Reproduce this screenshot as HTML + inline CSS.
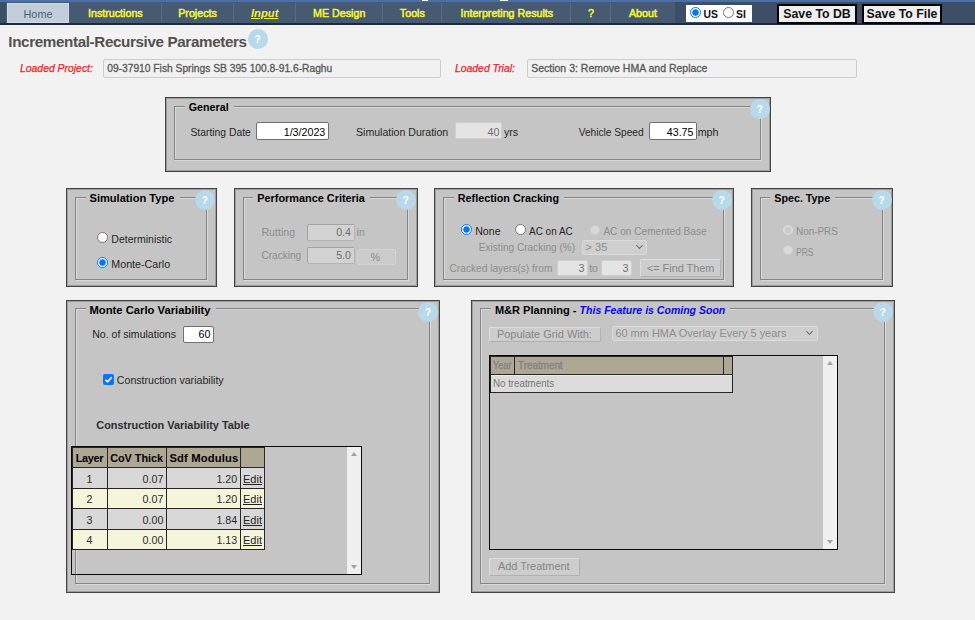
<!DOCTYPE html>
<html>
<head>
<meta charset="utf-8">
<title>Incremental-Recursive Parameters</title>
<style>
html,body{margin:0;padding:0;}
body{width:975px;height:620px;overflow:hidden;background:#f2f2f2;font-family:"Liberation Sans","DejaVu Sans",sans-serif;font-size:10.4px;color:#262626;position:relative;}
body>div{position:absolute;box-sizing:border-box;white-space:nowrap;}
#topstrip{left:0;top:0;width:975px;height:2px;background:#4d6fa8;overflow:hidden;}
#nav{left:0;top:2px;width:975px;height:23px;background:#3c4f66;border-bottom:2px solid #1d2a39;}
#navitems{left:6px;top:2px;width:669px;height:21px;background:#465a71;}
.sep{top:3px;width:1px;height:19px;background:#586b82;}
#home{left:7px;top:3px;width:62px;height:20px;background:#c1cdda;border:1px solid #d3dbe5;}
#units{left:686px;top:5px;width:66px;height:17px;background:#fff;}
.t{line-height:14px;color:#262626;}
.nv{color:#f4f13a;-webkit-text-stroke:0.55px #f4f13a;}
.radio{width:11px;height:11px;border-radius:50%;}
.ron{border:1px solid #0075ff;background:radial-gradient(circle,#0075ff 0,#0075ff 2.9px,#fff 3.5px);}
.roff{border:1px solid #767676;background:#fff;}
.rdis{width:10px;height:10px;border:1px solid #cfcfcf;background:#d9d9d9;}
.rdison{width:10px;height:10px;border:2px solid #d9d9d9;background:#c9c9c9;}
.btn{border:2px solid #000;background:#efefef;font-weight:bold;color:#111;text-align:center;}
.h1{color:#55504e;}
.help{border-radius:50%;background:#b8d9ea;color:#fff;font-weight:bold;font-size:10px;text-align:center;}
.red{color:#ea1f2a;font-style:italic;-webkit-text-stroke:0.25px #ea1f2a;}
.ro{border:1px solid #cdcdcd;background:#f1f1f1;border-radius:2px;}
.rot{color:#585858;-webkit-text-stroke:0.3px #585858;}
.panel{background:#c5c5c5;border:1px solid #444;box-shadow:inset 0 0 0 1px rgba(0,0,0,0.2);}
.fs{border:1px solid #858585;box-shadow:inset 1px 1px 0 #d9d9d9, 1px 1px 0 #d9d9d9;}
.lgbg{background:#c5c5c5;}
.lg{font-weight:bold;color:#000;}
.dis{color:#8d8d8d;}
.inp{background:#fff;border:1px solid #707070;border-radius:2px;}
.inpd{background:#e4e4e4;border:1px solid #cfcfcf;border-radius:2px;}
.inpd2{background:#d2d2d2;border:1px solid #b4b4b4;border-top-color:#a2a2a2;border-left-color:#a2a2a2;border-radius:2px;}
.sel{background:#cfcfcf;border:1px solid #dadada;border-radius:2px;}
.dbtn{background:#cdcdcd;border:1px solid #b0b0b0;border-top-color:#dddddd;border-left-color:#dddddd;border-radius:2px;}
.it{color:#000;}
.itd{color:#6e6e6e;}
.grid{border:1px solid #0a0a0a;}
.sb{background:#f0f0f0;}
.th{background:#aea793;border:1px solid #262626;}
.c0{background:#d8d8d8;border:1px solid #262626;}
.c1{background:#f5f5dc;border:1px solid #262626;}
.tht{font-weight:bold;color:#000;}
.ct{color:#2a2a2a;}
.lnk{color:#222;text-decoration:underline;}
.arr{width:0;height:0;border-left:3px solid transparent;border-right:3px solid transparent;}
.chev{width:5px;height:5px;border-right:1.6px solid #6f6f6f;border-bottom:1.6px solid #6f6f6f;transform:rotate(45deg);}
</style>
</head>
<body>

<div id="topstrip"></div>
<div id="nav"></div>
<div style="left:422px;top:0;width:6px;height:1px;background:#fff;"></div>
<div style="left:500px;top:0;width:8px;height:1px;background:#fff;"></div>
<div id="navitems"></div>
<div id="home"></div>
<div class="t" style="left:-12px;width:100px;text-align:center;top:7.00px;font-size:10.9px;color:#4b6079;">Home</div>
<div class="t nv" style="left:45.35px;width:140px;text-align:center;top:6.00px;font-size:10.7px;">Instructions</div>
<div class="t nv" style="left:127.5px;width:140px;text-align:center;top:6.00px;font-size:10.7px;">Projects</div>
<div class="t nv" style="left:194.7px;width:140px;text-align:center;top:6.00px;font-size:10.7px;font-style:italic;text-decoration:underline;font-weight:bold;-webkit-text-stroke:0;font-size:11.2px;">Input</div>
<div class="t nv" style="left:269.25px;width:140px;text-align:center;top:6.00px;font-size:10.7px;">ME Design</div>
<div class="t nv" style="left:342.35px;width:140px;text-align:center;top:6.00px;font-size:10.7px;">Tools</div>
<div class="t nv" style="left:436.85px;width:140px;text-align:center;top:6.00px;font-size:10.7px;">Interpreting Results</div>
<div class="t nv" style="left:521.05px;width:140px;text-align:center;top:6.00px;font-size:10.7px;">?</div>
<div class="t nv" style="left:572.9px;width:140px;text-align:center;top:6.00px;font-size:10.7px;">About</div>
<div class="sep" style="left:161px;"></div>
<div class="sep" style="left:233px;"></div>
<div class="sep" style="left:295px;"></div>
<div class="sep" style="left:382px;"></div>
<div class="sep" style="left:441px;"></div>
<div class="sep" style="left:570px;"></div>
<div class="sep" style="left:610px;"></div>
<div id="units"></div>
<div class="radio ron" style="left:689.9px;top:7.3px;"></div>
<div class="t" style="left:703.5px;top:7.50px;font-size:10.4px;font-weight:bold;color:#111;">US</div>
<div class="radio roff" style="left:722.5px;top:7.3px;"></div>
<div class="t" style="left:736px;top:7.50px;font-size:10.4px;font-weight:bold;color:#111;">SI</div>
<div class="btn" style="left:777px;top:4px;width:80px;height:20px;"></div>
<div class="t" style="left:767px;width:100px;text-align:center;top:7.00px;font-size:12.3px;font-weight:bold;color:#111;">Save To DB</div>
<div class="btn" style="left:862px;top:4px;width:80px;height:20px;"></div>
<div class="t" style="left:852px;width:100px;text-align:center;top:7.00px;font-size:12.3px;font-weight:bold;color:#111;">Save To File</div>
<div class="t h1" style="left:8.3px;top:34.50px;font-size:15.2px;font-weight:bold;letter-spacing:-0.36px;">Incremental-Recursive Parameters</div>
<div class="help" style="left:247.6px;top:28.5px;width:20px;height:20px;line-height:21.5px;">?</div>
<div class="t red" style="left:20px;top:61.50px;font-size:10.42px;">Loaded Project:</div>
<div class="ro" style="left:103px;top:59px;width:338px;height:19px;"></div>
<div class="t rot" style="left:107.2px;top:61.50px;font-size:10.25px;">09-37910 Fish Springs SB 395 100.8-91.6-Raghu</div>
<div class="t red" style="left:455px;top:61.50px;font-size:10.4px;">Loaded Trial:</div>
<div class="ro" style="left:527px;top:59px;width:330px;height:19px;"></div>
<div class="t rot" style="left:531.2px;top:61.00px;font-size:10.5px;">Section 3: Remove HMA and Replace</div>
<div class="panel" style="left:165px;top:97px;width:606px;height:75px;"></div>
<div class="fs" style="left:174px;top:106px;width:587px;height:54px;"></div>
<div class="lgbg" style="left:184.8px;top:100.8px;width:48.8px;height:13px;"></div>
<div class="t lg" style="left:188.8px;top:100.00px;font-size:10.7px;">General</div>
<div class="help" style="left:749.8px;top:99.3px;width:20px;height:20px;line-height:21.5px;">?</div>
<div class="t" style="left:190.4px;top:125.50px;font-size:10.37px;">Starting Date</div>
<div class="inp" style="left:256px;top:122px;width:73px;height:18px;"></div>
<div class="t it" style="right:649.7px;top:125.00px;font-size:10.7px;">1/3/2023</div>
<div class="t" style="left:356px;top:125.00px;font-size:10.57px;">Simulation Duration</div>
<div class="inpd" style="left:455px;top:122px;width:47px;height:17px;"></div>
<div class="t itd" style="right:475.5px;top:125.00px;font-size:10.7px;">40</div>
<div class="t" style="left:504.1px;top:125.00px;font-size:10.5px;">yrs</div>
<div class="t" style="left:578.8px;top:125.50px;font-size:10.15px;">Vehicle Speed</div>
<div class="inp" style="left:649px;top:122px;width:48px;height:18px;"></div>
<div class="t it" style="right:281.5px;top:125.00px;font-size:10.7px;">43.75</div>
<div class="t" style="left:697.7px;top:125.00px;font-size:10.64px;">mph</div>
<div class="panel" style="left:66px;top:188px;width:151px;height:99px;"></div>
<div class="fs" style="left:75px;top:197px;width:132px;height:83px;"></div>
<div class="lgbg" style="left:85.5px;top:191.7px;width:94px;height:13px;"></div>
<div class="t lg" style="left:89.5px;top:191.00px;font-size:11.1px;">Simulation Type</div>
<div class="help" style="left:194.9px;top:190.2px;width:20px;height:20px;line-height:21.5px;">?</div>
<div class="radio roff" style="left:97.3px;top:232.3px;"></div>
<div class="t" style="left:111.3px;top:232.00px;font-size:10.5px;">Deterministic</div>
<div class="radio ron" style="left:97.3px;top:257.2px;"></div>
<div class="t" style="left:111.3px;top:257.00px;font-size:10.7px;">Monte-Carlo</div>
<div class="panel" style="left:234px;top:188px;width:184px;height:99px;"></div>
<div class="fs" style="left:243px;top:197px;width:165px;height:83px;"></div>
<div class="lgbg" style="left:253.3px;top:191.7px;width:116.7px;height:13px;"></div>
<div class="t lg" style="left:257.3px;top:191.00px;font-size:10.89px;">Performance Criteria</div>
<div class="help" style="left:395.8px;top:190.4px;width:20px;height:20px;line-height:21.5px;">?</div>
<div class="t dis" style="left:261.4px;top:225.00px;font-size:10.64px;">Rutting</div>
<div class="inpd2" style="left:307px;top:224px;width:48px;height:17px;"></div>
<div class="t itd" style="right:624px;top:225.00px;font-size:10.7px;">0.4</div>
<div class="t dis" style="left:356.6px;top:225.50px;font-size:10.4px;">in</div>
<div class="t dis" style="left:261.4px;top:248.50px;font-size:10.09px;">Cracking</div>
<div class="inpd2" style="left:307px;top:247px;width:48px;height:17px;"></div>
<div class="t itd" style="right:624px;top:248.00px;font-size:10.7px;">5.0</div>
<div class="sel" style="left:356.5px;top:249px;width:39px;height:15.5px;background:#cbcbcb;border-color:#d3d3d3;"></div>
<div class="t dis" style="left:325.3px;width:100px;text-align:center;top:250.00px;font-size:10.7px;">%</div>
<div class="panel" style="left:434px;top:188px;width:300px;height:99px;"></div>
<div class="fs" style="left:443px;top:197px;width:281px;height:83px;"></div>
<div class="lgbg" style="left:453.8px;top:191.7px;width:110.3px;height:13px;"></div>
<div class="t lg" style="left:457.8px;top:191.00px;font-size:10.79px;">Reflection Cracking</div>
<div class="help" style="left:711.9px;top:190.2px;width:20px;height:20px;line-height:21.5px;">?</div>
<div class="radio ron" style="left:461.2px;top:224.2px;"></div>
<div class="t" style="left:475.2px;top:224.00px;font-size:10.62px;">None</div>
<div class="radio roff" style="left:515px;top:224.2px;"></div>
<div class="t" style="left:529px;top:224.50px;font-size:10.4px;transform:scaleX(0.958);transform-origin:0 0;">AC on AC</div>
<div class="radio rdis" style="left:589.5px;top:224.5px;"></div>
<div class="t dis" style="left:603.4px;top:224.50px;font-size:10.1px;">AC on Cemented Base</div>
<div class="t dis" style="left:478.8px;top:240.50px;font-size:10.08px;">Existing Cracking (%)</div>
<div class="sel" style="left:581.5px;top:240px;width:65.5px;height:14.5px;"></div>
<div class="t dis" style="left:585.6px;top:240.00px;font-size:10.99px;">&gt; 35</div>
<div class="chev" style="left:636.5px;top:243px;"></div>
<div class="t dis" style="left:449.5px;top:261.50px;font-size:10.18px;">Cracked layers(s) from</div>
<div class="inpd" style="left:557px;top:260px;width:30.5px;height:16px;"></div>
<div class="t itd" style="right:390.5px;top:261.00px;font-size:10.7px;">3</div>
<div class="t dis" style="left:589.2px;top:261.50px;font-size:10.4px;">to</div>
<div class="inpd" style="left:600.5px;top:260px;width:31px;height:16px;"></div>
<div class="t itd" style="right:346.5px;top:261.00px;font-size:10.7px;">3</div>
<div class="dbtn" style="left:640px;top:259px;width:81px;height:17.5px;"></div>
<div class="t" style="left:646.9px;top:261.00px;font-size:10.89px;color:#858585;">&lt;= Find Them</div>
<div class="panel" style="left:751px;top:188px;width:142px;height:99px;"></div>
<div class="fs" style="left:760px;top:197px;width:123px;height:83px;"></div>
<div class="lgbg" style="left:770.3px;top:191.7px;width:64.8px;height:13px;"></div>
<div class="t lg" style="left:774.3px;top:191.00px;font-size:10.72px;">Spec. Type</div>
<div class="help" style="left:871.6px;top:190.2px;width:20px;height:20px;line-height:21.5px;">?</div>
<div class="radio rdison" style="left:782.6px;top:224.5px;"></div>
<div class="t dis" style="left:795.9px;top:224.50px;font-size:10.4px;transform:scaleX(0.954);transform-origin:0 0;">Non-PRS</div>
<div class="radio rdis" style="left:782.6px;top:245.4px;"></div>
<div class="t dis" style="left:795.9px;top:245.50px;font-size:10.4px;transform:scaleX(0.82);transform-origin:0 0;">PRS</div>
<div class="panel" style="left:66px;top:300px;width:374px;height:293px;"></div>
<div class="fs" style="left:75px;top:308px;width:355px;height:276px;"></div>
<div class="lgbg" style="left:85.5px;top:303.9px;width:130.2px;height:13px;"></div>
<div class="t lg" style="left:89.5px;top:303.00px;font-size:11.24px;">Monte Carlo Variability</div>
<div class="help" style="left:418px;top:302px;width:20px;height:20px;line-height:21.5px;">?</div>
<div class="t" style="left:92.2px;top:327.00px;font-size:10.56px;">No. of simulations</div>
<div class="inp" style="left:183px;top:325.5px;width:31px;height:17px;"></div>
<div class="t it" style="right:764.6px;top:327.00px;font-size:10.7px;">60</div>
<div style="left:103px;top:373.5px;width:11px;height:11px;background:#0b73f6;border-radius:2px;"></div>
<svg style="position:absolute;left:103px;top:373.5px;" width="11" height="11" viewBox="0 0 11 11"><path d="M2.4 5.7 L4.5 7.8 L8.7 3.2" fill="none" stroke="#fff" stroke-width="1.6"/></svg>
<div class="t" style="left:116.8px;top:373.00px;font-size:10.63px;">Construction variability</div>
<div class="t" style="left:96.3px;top:418.00px;font-size:10.93px;color:#2e2e2e;font-weight:bold;">Construction Variability Table</div>
<div class="grid" style="left:71px;top:446px;width:291px;height:129px;"></div>
<div class="sb" style="left:347px;top:447px;width:14px;height:127px;"></div>
<div class="arr" style="left:351px;top:452px;border-bottom:4px solid #a3a3a3;"></div>
<div class="arr" style="left:351px;top:565px;border-top:4px solid #a3a3a3;"></div>
<div class="th" style="left:72px;top:447px;width:36px;height:21px;"></div>
<div class="th" style="left:107px;top:447px;width:60px;height:21px;"></div>
<div class="th" style="left:166px;top:447px;width:75px;height:21px;"></div>
<div class="th" style="left:240px;top:447px;width:25px;height:21px;"></div>
<div class="c0" style="left:72px;top:467px;width:36px;height:22px;"></div>
<div class="c0" style="left:107px;top:467px;width:60px;height:22px;"></div>
<div class="c0" style="left:166px;top:467px;width:75px;height:22px;"></div>
<div class="c0" style="left:240px;top:467px;width:25px;height:22px;"></div>
<div class="c1" style="left:72px;top:488px;width:36px;height:21px;"></div>
<div class="c1" style="left:107px;top:488px;width:60px;height:21px;"></div>
<div class="c1" style="left:166px;top:488px;width:75px;height:21px;"></div>
<div class="c1" style="left:240px;top:488px;width:25px;height:21px;"></div>
<div class="c0" style="left:72px;top:508px;width:36px;height:22px;"></div>
<div class="c0" style="left:107px;top:508px;width:60px;height:22px;"></div>
<div class="c0" style="left:166px;top:508px;width:75px;height:22px;"></div>
<div class="c0" style="left:240px;top:508px;width:25px;height:22px;"></div>
<div class="c1" style="left:72px;top:529px;width:36px;height:21px;"></div>
<div class="c1" style="left:107px;top:529px;width:60px;height:21px;"></div>
<div class="c1" style="left:166px;top:529px;width:75px;height:21px;"></div>
<div class="c1" style="left:240px;top:529px;width:25px;height:21px;"></div>
<div class="t tht" style="left:75.7px;top:451.00px;font-size:10.9px;letter-spacing:-0.3px;">Layer</div>
<div class="t tht" style="left:110.2px;top:451.00px;font-size:10.9px;letter-spacing:-0.05px;">CoV Thick</div>
<div class="t tht" style="left:169.4px;top:451.00px;font-size:11.2px;letter-spacing:0.18px;">Sdf Modulus</div>
<div class="t ct" style="left:39.5px;width:100px;text-align:center;top:472.00px;font-size:10.7px;">1</div>
<div class="t ct" style="right:811.6px;top:472.00px;font-size:10.7px;">0.07</div>
<div class="t ct" style="right:737.8px;top:472.00px;font-size:10.7px;">1.20</div>
<div class="t lnk" style="left:243px;top:472.00px;font-size:11px;">Edit</div>
<div class="t ct" style="left:39.5px;width:100px;text-align:center;top:492.00px;font-size:10.7px;">2</div>
<div class="t ct" style="right:811.6px;top:492.00px;font-size:10.7px;">0.07</div>
<div class="t ct" style="right:737.8px;top:492.00px;font-size:10.7px;">1.20</div>
<div class="t lnk" style="left:243px;top:492.00px;font-size:11px;">Edit</div>
<div class="t ct" style="left:39.5px;width:100px;text-align:center;top:513.00px;font-size:10.7px;">3</div>
<div class="t ct" style="right:811.6px;top:513.00px;font-size:10.7px;">0.00</div>
<div class="t ct" style="right:737.8px;top:513.00px;font-size:10.7px;">1.84</div>
<div class="t lnk" style="left:243px;top:513.00px;font-size:11px;">Edit</div>
<div class="t ct" style="left:39.5px;width:100px;text-align:center;top:533.00px;font-size:10.7px;">4</div>
<div class="t ct" style="right:811.6px;top:533.00px;font-size:10.7px;">0.00</div>
<div class="t ct" style="right:737.8px;top:533.00px;font-size:10.7px;">1.13</div>
<div class="t lnk" style="left:243px;top:533.00px;font-size:11px;">Edit</div>
<div class="panel" style="left:471px;top:300px;width:424px;height:293px;"></div>
<div class="fs" style="left:480px;top:308px;width:405px;height:276px;"></div>
<div class="lgbg" style="left:491px;top:304px;width:239px;height:13px;"></div>
<div class="t lg" style="left:494.9px;top:303.00px;font-size:11.05px;">M&amp;R Planning - </div>
<div class="t" style="left:579.6px;top:303.00px;font-size:10.54px;font-weight:bold;font-style:italic;color:#0505f2;">This Feature is Coming Soon</div>
<div class="help" style="left:872.9px;top:302px;width:20px;height:20px;line-height:21.5px;">?</div>
<div class="dbtn" style="left:489px;top:326.5px;width:111.5px;height:15.5px;"></div>
<div class="t" style="left:496.9px;top:327.00px;font-size:10.96px;color:#858585;">Populate Grid With:</div>
<div class="sel" style="left:611.5px;top:326px;width:206px;height:15px;"></div>
<div class="t dis" style="left:615.4px;top:326.00px;font-size:10.96px;">60 mm HMA Overlay Every 5 years</div>
<div class="chev" style="left:806.5px;top:329px;"></div>
<div class="grid" style="left:489px;top:355px;width:349px;height:195px;"></div>
<div class="sb" style="left:823px;top:356px;width:14px;height:193px;"></div>
<div class="arr" style="left:827px;top:361px;border-bottom:4px solid #a3a3a3;"></div>
<div class="arr" style="left:827px;top:540px;border-top:4px solid #a3a3a3;"></div>
<div class="th" style="left:490px;top:356px;width:25px;height:19px;"></div>
<div class="th" style="left:514px;top:356px;width:210px;height:19px;"></div>
<div class="th" style="left:723px;top:356px;width:10px;height:19px;"></div>
<div class="c0" style="left:490px;top:374px;width:243px;height:19px;background:#dcdcdc;box-shadow:inset 0 1px 0 #ececec;"></div>
<div class="t" style="left:493px;top:358.00px;font-size:10.5px;color:#83858a;-webkit-text-stroke:0.4px #83858a;transform:scaleX(0.86);transform-origin:0 0;">Year</div>
<div class="t" style="left:518.4px;top:358.00px;font-size:10.5px;color:#83858a;-webkit-text-stroke:0.4px #83858a;transform:scaleX(0.94);transform-origin:0 0;">Treatment</div>
<div class="t" style="left:493.2px;top:376.50px;font-size:10.3px;color:#787878;transform:scaleX(0.945);transform-origin:0 0;">No treatments</div>
<div class="dbtn" style="left:489px;top:558px;width:90.5px;height:17.5px;"></div>
<div class="t" style="left:497.9px;top:559.00px;font-size:10.95px;color:#858585;">Add Treatment</div>
</body>
</html>
